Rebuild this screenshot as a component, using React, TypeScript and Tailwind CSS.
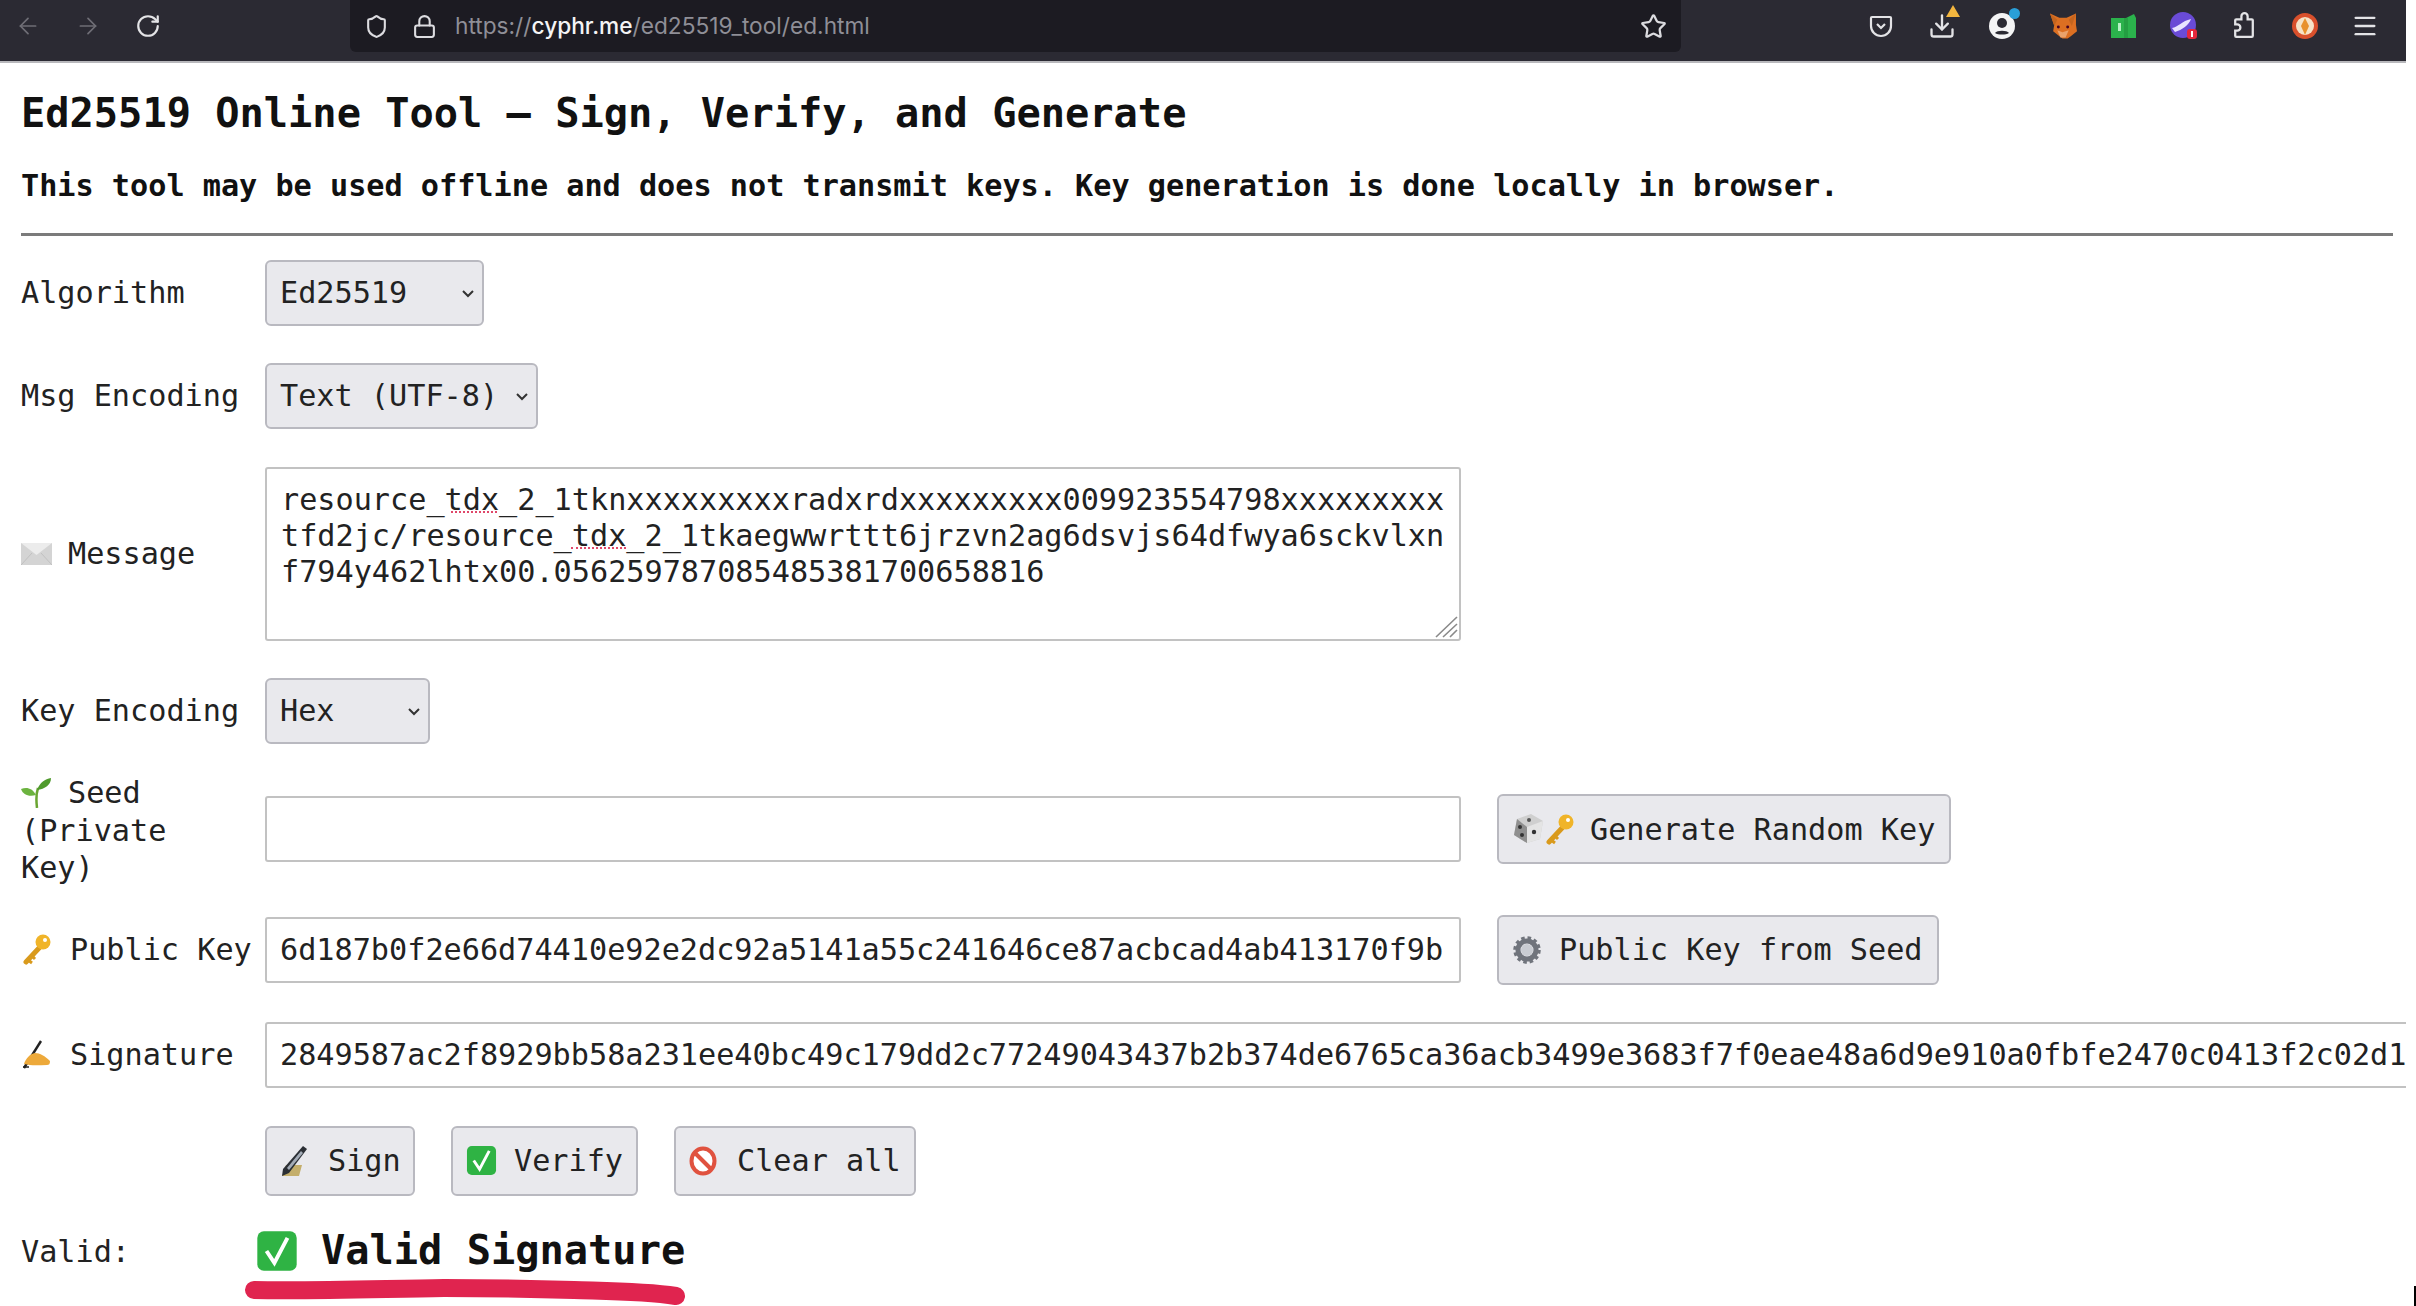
import { ArrowLeft, ArrowRight, Download, Lock, Menu, RotateCw, Shield, Star } from "lucide-react";

const SIGNATURE =
  "2849587ac2f8929bb58a231ee40bc49c179dd2c77249043437b2b374de6765ca36acb3499e3683f7f0eae48a6d9e910a0fbfe2470c0413f2c02d1";
const PUBLIC_KEY = "6d187b0f2e66d74410e92e2dc92a5141a55c241646ce87acbcad4ab413170f9b";
const MESSAGE =
  "resource_tdx_2_1tknxxxxxxxxxradxrdxxxxxxxxx009923554798xxxxxxxxxtfd2jc/resource_tdx_2_1tkaegwwrttt6jrzvn2ag6dsvjs64dfwya6sckvlxnf794y462lhtx00.056259787085485381700658816";

function CheckBox({ size = 31 }: { size?: number }) {
  return (
    <svg width={size} height={size} viewBox="0 0 32 32" aria-hidden="true" className="shrink-0">
      <rect x="1" y="1" width="30" height="30" rx="5" fill="#2fb344" />
      <path d="M8 16l6 9L24 6" fill="none" stroke="#fff" strokeWidth="3" />
    </svg>
  );
}

function KeyIcon({ size = 32 }: { size?: number }) {
  return (
    <svg width={size} height={size} viewBox="0 0 32 32" aria-hidden="true" className="shrink-0">
      <path d="M19 14L5 29" stroke="#d99a1c" strokeWidth="5" strokeLinecap="round" />
      <path d="M7 27l4 3M11 23l3 3" stroke="#d99a1c" strokeWidth="3" />
      <circle cx="22" cy="9" r="7.5" fill="#f0b429" />
      <circle cx="24" cy="7" r="2" fill="#fff" />
    </svg>
  );
}

function Envelope() {
  return (
    <svg width="31" height="22" viewBox="0 0 31 22" aria-hidden="true" className="shrink-0">
      <rect width="31" height="22" fill="#d4d4d4" />
      <path d="M0 0l15.5 12L31 0" fill="#ececec" />
      <path d="M0 22l11-12M31 22L20 10" stroke="#c0c0c0" />
    </svg>
  );
}

function Sprout() {
  return (
    <svg width="31" height="30" viewBox="0 0 31 30" aria-hidden="true" className="shrink-0">
      <path d="M16 30c-1-8-1-14 1-20" stroke="#6aa532" strokeWidth="2.5" fill="none" />
      <path d="M16 12C19 4 24 1 30 0c0 7-6 11-14 12z" fill="#4f9a2c" />
      <path d="M15 17C11 10 6 9 0 11c2 6 8 8 15 6z" fill="#6cb33f" />
    </svg>
  );
}

function WritingHand() {
  return (
    <svg width="32" height="32" viewBox="0 0 32 32" aria-hidden="true" className="shrink-0">
      <path d="M3 30L20 3" stroke="#222" strokeWidth="2.4" />
      <path d="M3 26c2-6 6-10 11-11 5 0 10 3 15 8 0 3-1 4-3 4-8 0-15 1-23-1z" fill="#eda93a" />
      <path d="M2 29h6" stroke="#222" strokeWidth="1.5" />
    </svg>
  );
}

function Dice() {
  return (
    <svg width="32" height="30" viewBox="0 0 32 30" aria-hidden="true" className="shrink-0">
      <path d="M5 6l14-5 12 7-3 18-13 4-13-8z" fill="#cfcfcf" />
      <path d="M5 6l10 8v16L2 22z" fill="#8f8f8f" />
      <path d="M15 14l16-6-3 18-13 4z" fill="#e4e4e4" />
      <circle cx="8" cy="14" r="2" fill="#333" />
      <circle cx="10" cy="22" r="2" fill="#333" />
      <circle cx="22" cy="19" r="2.2" fill="#333" />
      <circle cx="17" cy="7" r="2" fill="#555" />
    </svg>
  );
}

function Gear() {
  return (
    <svg width="30" height="30" viewBox="0 0 30 30" aria-hidden="true" className="shrink-0">
      <circle cx="15" cy="15" r="9" fill="none" stroke="#70747c" strokeWidth="5" />
      <circle cx="15" cy="15" r="12" fill="none" stroke="#70747c" strokeWidth="3.5" strokeDasharray="3.5 2.8" />
      <circle cx="15" cy="15" r="6" fill="#c9ccd2" />
    </svg>
  );
}

function PenNib() {
  return (
    <svg width="28" height="32" viewBox="0 0 28 32" aria-hidden="true" className="shrink-0">
      <path d="M6 20h16l-3 11H2z" fill="#c4ae6b" />
      <path d="M23 1l4 3L9 28l-7 3 1-7z" fill="#2b2f35" />
      <path d="M21 6l2 2L9 25l-2-2z" fill="#a3abb6" />
    </svg>
  );
}

function NoEntry() {
  return (
    <svg width="28" height="30" viewBox="0 0 28 30" aria-hidden="true" className="shrink-0">
      <ellipse cx="14" cy="15" rx="11.5" ry="12.5" fill="#fff" stroke="#e0523f" strokeWidth="4" />
      <path d="M6 7l16 16" stroke="#e0523f" strokeWidth="4" />
    </svg>
  );
}

function Pocket() {
  return (
    <svg width="24" height="24" viewBox="0 0 24 24" fill="none" stroke="#e3e3e6" strokeWidth="2.2" aria-hidden="true">
      <path d="M3 3h18a1 1 0 0 1 1 1v8a10 10 0 0 1-20 0V4a1 1 0 0 1 1-1z" />
      <path d="M8 10l4 4 4-4" />
    </svg>
  );
}

function Account() {
  return (
    <svg width="28" height="28" viewBox="0 0 28 28" aria-hidden="true">
      <circle cx="14" cy="14" r="13" fill="#f4f4f5" />
      <circle cx="14" cy="11" r="5" fill="#2b2a33" />
      <path d="M7 21c2-3 12-3 14 0-3 2-11 2-14 0z" fill="#2b2a33" />
    </svg>
  );
}

function PuzzlePiece() {
  return (
    <svg width="26" height="30" viewBox="0 0 25 29" fill="none" stroke="#e3e3e6" strokeWidth="2.2" aria-hidden="true">
      <path d="M5 8h5V5a3 3 0 0 1 6 0v3h4a1 1 0 0 1 1 1v15a1 1 0 0 1-1 1H5a1 1 0 0 1-1-1v-5h2a3 3 0 0 0 0-6H4V9a1 1 0 0 1 1-1z" />
    </svg>
  );
}

function Fox() {
  return (
    <svg width="28" height="28" viewBox="0 0 27 26" aria-hidden="true">
      <path d="M1 1l9 4h7l9-4v11l1 6-6 5-3 2h-5l-3-2-6-5 1-6z" fill="#dc6f22" />
      <path d="M8 17l5 2 6-2-3 7h-5z" fill="#eaa26b" />
      <path d="M1 1l7 6-3 6zM26 1l-7 6 3 6z" fill="#c4641e" />
      <circle cx="9" cy="14" r="1.4" fill="#402" />
      <circle cx="18" cy="14" r="1.4" fill="#402" />
    </svg>
  );
}

function GreenWallet() {
  return (
    <svg width="27" height="26" viewBox="0 0 27 26" aria-hidden="true">
      <path d="M1 5h15l8-4 2 4v20H1z" fill="#2bb24c" />
      <path d="M14 5h4v20h-4z" fill="#249f42" />
      <rect x="8" y="10" width="3" height="8" fill="#b6f0c4" />
    </svg>
  );
}

function PurpleOrb() {
  return (
    <svg width="30" height="30" viewBox="0 0 30 30" aria-hidden="true">
      <circle cx="14" cy="14" r="13" fill="#6a4bd6" />
      <path d="M3 17c6-1 10-7 19-9-2 6-9 11-16 13z" fill="#e8e4ff" />
      <rect x="18" y="18" width="10" height="10" rx="3" fill="#e5283c" />
      <rect x="22" y="20" width="2" height="6" fill="#fff" />
    </svg>
  );
}

function RedBadge() {
  return (
    <svg width="28" height="28" viewBox="0 0 28 28" aria-hidden="true">
      <circle cx="14" cy="14" r="13" fill="#d9502c" />
      <circle cx="14" cy="14" r="9" fill="#f6e3c8" />
      <path d="M14 6l4 8-4 9-4-9z" fill="#e8912d" />
    </svg>
  );
}

function ToolSlot({ children }: { children: React.ReactNode }) {
  return <div className="relative flex h-[52px] w-[60.5px] items-center justify-center">{children}</div>;
}

function Toolbar() {
  return (
    <div className="flex h-[63px] w-full items-start border-b-2 border-[#b8b8bc] bg-[#2b2a33] font-['Inter',sans-serif]">
      <div className="flex h-[52px] w-[350px] items-center gap-[34px] pl-[15px]">
        <ArrowLeft size={26} strokeWidth={1.6} className="text-[#6f6e76]" />
        <ArrowRight size={26} strokeWidth={1.6} className="text-[#6f6e76]" />
        <RotateCw size={26} strokeWidth={2} className="text-[#e4e4e7]" />
      </div>
      <div className="flex h-[52px] w-[1331px] items-center rounded-b-[6px] bg-[#1c1b22] pl-[14px] pr-[14px]">
        <Shield size={25} strokeWidth={2} className="text-[#dcdce0]" />
        <Lock size={25} strokeWidth={2} className="ml-[23px] text-[#dcdce0]" />
        <div className="ml-[18px] whitespace-nowrap text-[22.7px] text-[#8f8f97]">
          https://<span className="font-medium text-[#f4f4f5]">cyphr.me</span>/ed25519_tool/ed.html
        </div>
        <Star size={27} strokeWidth={2} className="ml-auto text-[#dcdce0]" />
      </div>
      <div className="ml-[170px] flex">
        <ToolSlot>
          <Pocket />
        </ToolSlot>
        <ToolSlot>
          <Download size={28} strokeWidth={2} className="text-[#e3e3e6]" />
          <span className="absolute right-[12px] top-[5px] h-0 w-0 border-x-[7px] border-b-[12px] border-x-transparent border-b-[#f3b63f]" />
        </ToolSlot>
        <ToolSlot>
          <Account />
          <span className="absolute right-[13px] top-[8px] h-[11px] w-[11px] rounded-full bg-[#2a9fd8]" />
        </ToolSlot>
        <ToolSlot>
          <Fox />
        </ToolSlot>
        <ToolSlot>
          <GreenWallet />
        </ToolSlot>
        <ToolSlot>
          <PurpleOrb />
        </ToolSlot>
        <ToolSlot>
          <PuzzlePiece />
        </ToolSlot>
        <ToolSlot>
          <RedBadge />
        </ToolSlot>
        <ToolSlot>
          <Menu size={28} strokeWidth={2} className="text-[#e3e3e6]" />
        </ToolSlot>
      </div>
    </div>
  );
}

function Select({ value, width }: { value: string; width: string }) {
  return (
    <div className={`relative ${width}`}>
      <select
        defaultValue={value}
        className="h-[66px] w-full appearance-none rounded-[6px] border-2 border-[#b9b9c0] bg-[#e9e9ed] pl-[13px] text-[#222]"
      >
        <option>{value}</option>
      </select>
      <svg
        width="12"
        height="8"
        viewBox="0 0 12 8"
        fill="none"
        stroke="#333"
        strokeWidth="2"
        className="pointer-events-none absolute right-[10px] top-[30px]"
        aria-hidden="true"
      >
        <path d="M1 1l5 5 5-5" />
      </svg>
    </div>
  );
}

function Button({ width, gap, children }: { width: string; gap: string; children: React.ReactNode }) {
  return (
    <button
      className={`flex h-[70px] shrink-0 items-center rounded-[6px] border-2 border-[#b9b9c0] bg-[#e9e9ed] pl-[13px] text-[#222] ${width} ${gap}`}
    >
      {children}
    </button>
  );
}

const inputClass = "h-[66px] rounded-[3px] border-2 border-[#c2c2c2] bg-white px-[13px] text-[#222] outline-none";

export default function App() {
  return (
    <div className="relative h-[1306px] w-[2416px] overflow-hidden bg-white font-['DejaVu_Sans_Mono',monospace] text-[30.2px] text-[#222]">
      <div className="w-[2406px] overflow-hidden">
        <Toolbar />
        <div className="h-[1243px] pl-[21px] pr-[13px]">
          <h1 className="mt-[27px] text-[40.35px] font-bold leading-[48px] text-[#111]">
            Ed25519 Online Tool – Sign, Verify, and Generate
          </h1>
          <p className="mt-[29px] font-bold leading-[38px] text-[#111]">
            This tool may be used offline and does not transmit keys. Key generation is done locally in browser.
          </p>
          <hr className="mt-[28px] border-t-[3px] border-[#7b7b7b]" />

          <div className="mt-[24px] flex items-center">
            <label className="w-[244px]">Algorithm</label>
            <Select value="Ed25519" width="w-[219px]" />
          </div>

          <div className="mt-[37px] flex items-center">
            <label className="w-[244px]">Msg Encoding</label>
            <Select value="Text (UTF-8)" width="w-[273px]" />
          </div>

          <div className="mt-[38px] flex items-center">
            <label className="flex w-[244px] items-center gap-[16px]">
              <Envelope />
              Message
            </label>
            <div className="relative">
              <textarea
                readOnly
                spellCheck={false}
                defaultValue={MESSAGE}
                className="block h-[174px] w-[1196px] resize-none break-all rounded-[3px] border-2 border-[#c2c2c2] bg-white py-[13px] pl-[14px] pr-[12px] leading-[36px] text-[#222] outline-none"
              />
              <span className="absolute left-[186px] top-[44px] w-[46px] border-b-2 border-dotted border-[#e0486a]" />
              <span className="absolute left-[306px] top-[80px] w-[55px] border-b-2 border-dotted border-[#e0486a]" />
              <svg
                width="24"
                height="22"
                viewBox="0 0 24 22"
                fill="none"
                stroke="#8a8a8a"
                strokeWidth="1.6"
                className="pointer-events-none absolute bottom-[3px] right-[2px]"
                aria-hidden="true"
              >
                <path d="M1 21L22 1M8 21L22 8M15 21l7-7" />
              </svg>
            </div>
          </div>

          <div className="mt-[37px] flex items-center">
            <label className="w-[244px]">Key Encoding</label>
            <Select value="Hex" width="w-[165px]" />
          </div>

          <div className="mt-[28px] flex items-center">
            <label className="w-[244px] pt-[2px] leading-[37.5px]">
              <span className="flex items-center gap-[16px]">
                <Sprout />
                Seed
              </span>
              <span className="block w-[180px]">(Private Key)</span>
            </label>
            <input readOnly className={`${inputClass} w-[1196px]`} />
            <div className="ml-[36px]">
              <Button width="w-[454px]" gap="gap-[14px]">
                <span className="flex">
                  <Dice />
                  <KeyIcon />
                </span>
                Generate Random Key
              </Button>
            </div>
          </div>

          <div className="mt-[28px] flex items-center">
            <label className="flex w-[244px] items-center gap-[17px]">
              <KeyIcon />
              Public Key
            </label>
            <input readOnly value={PUBLIC_KEY} className={`${inputClass} w-[1196px]`} />
            <div className="ml-[36px]">
              <Button width="w-[442px]" gap="gap-[17px]">
                <Gear />
                Public Key from Seed
              </Button>
            </div>
          </div>

          <div className="mt-[37px] flex items-center">
            <label className="flex w-[244px] shrink-0 items-center gap-[17px]">
              <WritingHand />
              Signature
            </label>
            <input readOnly value={SIGNATURE} className={`${inputClass} w-[2300px] shrink-0`} />
          </div>

          <div className="ml-[244px] mt-[38px] flex gap-[36px]">
            <Button width="w-[150px]" gap="gap-[20px]">
              <PenNib />
              Sign
            </Button>
            <Button width="w-[187px]" gap="gap-[17px]">
              <CheckBox />
              Verify
            </Button>
            <Button width="w-[242px]" gap="gap-[20px]">
              <NoEntry />
              Clear all
            </Button>
          </div>

          <div className="mt-[33px] flex items-center">
            <label className="w-[235px]">Valid:</label>
            <div className="relative flex items-center gap-[23px] text-[40.35px] font-bold leading-[44px] text-[#111]">
              <CheckBox size={42} />
              Valid Signature
              <svg
                width="460"
                height="36"
                viewBox="0 0 460 36"
                fill="none"
                className="absolute -left-[20px] top-[46px]"
                aria-hidden="true"
              >
                <path
                  d="M18 15c60 1 120-1 190-2 70 0 100 1 130 2s70 1 102 6"
                  stroke="#e0244f"
                  strokeWidth="18"
                  strokeLinecap="round"
                />
              </svg>
            </div>
          </div>
        </div>
      </div>
      <span className="absolute bottom-0 right-0 h-[20px] w-[2px] bg-black" />
    </div>
  );
}
